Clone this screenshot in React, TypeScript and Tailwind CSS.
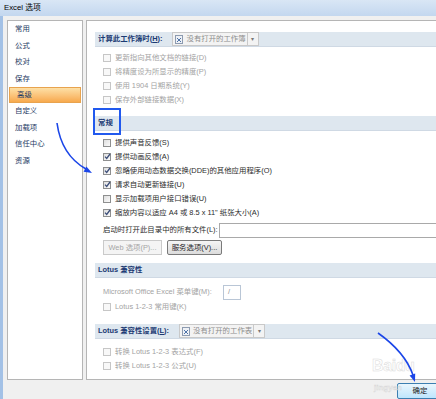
import React from "react";

const font = "font-['Liberation_Sans','Noto_Sans_CJK_SC',sans-serif]";

function Box({ checked = false, disabled = false }: { checked?: boolean; disabled?: boolean }) {
  return (
    <span
      className={`relative flex h-[8px] w-[8px] shrink-0 items-center justify-center border ${
        disabled
          ? "border-[#c6c6c6] bg-[#f8f8f8]"
          : "border-[#8e8f8f] bg-gradient-to-br from-[#dedede] to-[#fbfbfb]"
      }`}
    >
      {checked && (
        <svg width="7" height="7" viewBox="0 0 7 7" className="absolute -top-[1px] left-[0px]">
          <path d="M1 3.6 L2.7 5.4 L6 1" fill="none" stroke="#3d4f7a" strokeWidth="1.3" />
        </svg>
      )}
    </span>
  );
}

function Row({
  label,
  checked,
  disabled,
}: {
  label: string;
  checked?: boolean;
  disabled?: boolean;
}) {
  return (
    <div className="flex h-[14px] items-center gap-[4px] pl-[8px]">
      <Box checked={checked} disabled={disabled} />
      <span className={disabled ? "text-[#a3a3a3]" : "text-[#2c2c2c]"}>{label}</span>
    </div>
  );
}

function Band({ children, className = "" }: { children: React.ReactNode; className?: string }) {
  return (
    <div
      className={`flex h-[15px] items-center gap-[10px] border-b border-[#cfd9e4] bg-[#dee7ef] pl-[3px] font-bold text-[#1b3a73] ${className}`}
    >
      {children}
    </div>
  );
}

function Combo({ text }: { text: string }) {
  return (
    <div className="flex h-[14px] items-center border border-[#c9c9c9] bg-[#f3f3f3] font-normal">
      <svg width="9" height="9" viewBox="0 0 9 9" className="ml-[2px] shrink-0">
        <rect x="0.5" y="0.5" width="7" height="8" fill="#eef1f6" stroke="#8d9bb0" />
        <path d="M2 3 L6 7 M6 3 L2 7" stroke="#4f74a8" strokeWidth="1" />
      </svg>
      <span className="ml-[2px] mr-[1px] whitespace-nowrap text-[#8d8d8d]">{text}</span>
      <span className="flex h-full w-[11px] items-center justify-center border-l border-[#c9c9c9] text-[6px] text-[#777]">
        ▾
      </span>
    </div>
  );
}

const navItems = ["常用", "公式", "校对", "保存", "高级", "自定义", "加载项", "信任中心", "资源"];

export default function App() {
  return (
    <div className={`relative h-[399px] w-[436px] overflow-hidden bg-[#f0f0f0] text-[7.4px] leading-none ${font}`}>
      <div className="flex h-[16px] items-center bg-gradient-to-b from-[#d9e6f5] to-[#c3d7ef] pl-[4px] text-[7.8px] text-black">
        Excel 选项
      </div>
      <div className="flex h-[383px] flex-col border-l-[3px] border-[#a3c1e6]">
        <div className="flex gap-[3px] pl-[4px] pt-[4px]">
          <div className="h-[360px] w-[76px] shrink-0 border border-[#b5b5b5] bg-white">
            {navItems.map((n) => (
              <div
                key={n}
                className={`flex h-[16.4px] items-center pl-[7px] text-[#1e3a63] ${
                  n === "高级"
                    ? "mx-[1px] border border-[#e8a34e] bg-gradient-to-b from-[#fde0a6] to-[#f7a94c] pl-[6px]"
                    : ""
                }`}
              >
                {n}
              </div>
            ))}
          </div>
          <div className="h-[360px] w-[370px] shrink-0 border border-[#b5b5b5] bg-white pl-[8px] pt-[11px]">
            <Band>
              <span>计算此工作簿时(<u>H</u>):</span>
              <Combo text="没有打开的工作簿" />
            </Band>
            <div className="mt-[4px]">
              <Row label="更新指向其他文档的链接(D)" disabled />
              <Row label="将精度设为所显示的精度(P)" disabled />
              <Row label="使用 1904 日期系统(Y)" disabled />
              <Row label="保存外部链接数据(X)" disabled />
            </div>
            <Band className="mt-[9px]">常规</Band>
            <div className="mt-[5px]">
              <Row label="提供声音反馈(S)" />
              <Row label="提供动画反馈(A)" checked />
              <Row label="忽略使用动态数据交换(DDE)的其他应用程序(O)" checked />
              <Row label="请求自动更新链接(U)" checked />
              <Row label="显示加载项用户接口错误(U)" />
              <Row label='缩放内容以适应 A4 或 8.5 x 11" 纸张大小(A)' checked />
            </div>
            <div className="mt-[2px] flex h-[16px] items-center pl-[8px] text-[#2c2c2c]">
              <span className="w-[116px]">启动时打开此目录中的所有文件(L):</span>
              <div className="h-[15px] flex-1 border border-[#a9a9a9] bg-white" />
            </div>
            <div className="mt-[2px] flex h-[15px] items-stretch gap-[5px] pl-[8px]">
              <div className="flex w-[59px] items-center justify-center border border-[#cacaca] bg-[#f4f4f4] text-[#a5a5a5]">
                Web 选项(P)...
              </div>
              <div className="flex w-[55px] items-center justify-center rounded-[2px] border border-[#7a7a7a] bg-gradient-to-b from-[#f5f5f5] to-[#dcdcdc] text-[#1f1f1f]">
                服务选项(V)...
              </div>
            </div>
            <Band className="mt-[8px]">Lotus 兼容性</Band>
            <div className="mt-[6px] flex h-[16px] items-center pl-[8px] text-[#a3a3a3]">
              <span className="w-[120px]">Microsoft Office Excel 菜单键(M):</span>
              <div className="flex h-[15px] w-[18px] items-center border border-[#b9c6d6] bg-white pl-[4px] text-[#8f8f8f]">
                /
              </div>
            </div>
            <Row label="Lotus 1-2-3 常用键(K)" disabled />
            <Band className="mt-[10px]">
              <span>Lotus 兼容性设置(<u>L</u>):</span>
              <Combo text="没有打开的工作表" />
            </Band>
            <div className="mt-[6px]">
              <Row label="转换 Lotus 1-2-3 表达式(F)" disabled />
              <Row label="转换 Lotus 1-2-3 公式(U)" disabled />
            </div>
          </div>
        </div>
        <div className="ml-[394px] mt-[3px] flex h-[18px] w-[46px] items-center justify-center rounded-[2px] border border-[#3c7fb1] bg-gradient-to-b from-[#eaf6fd] to-[#bee6fd] text-[#1a1a1a]">
          确定
        </div>
      </div>

      <div className="pointer-events-none absolute left-[93px] top-[108px] h-[27px] w-[28px] border-2 border-[#2159ee]" />

      <div className="pointer-events-none absolute left-[372px] top-[358px] text-[16px] font-bold leading-none tracking-tight text-transparent [-webkit-text-stroke:0.5px_#dadada]">
        Baidu
      </div>
      <div className="pointer-events-none absolute left-[374px] top-[384px] text-[8px] font-bold leading-none text-transparent [-webkit-text-stroke:0.4px_#d6d6d6]">
        jingyan
      </div>

      <svg className="pointer-events-none absolute left-0 top-0" width="436" height="399">
        <path d="M57 123 C 60 145, 70 160, 86 169" fill="none" stroke="#1b46e8" strokeWidth="1.6" />
        <polygon points="92,173 83.6,171.8 86.4,166.6" fill="#1b46e8" />
        <path d="M378 333 C 395 345, 407 358, 413 375" fill="none" stroke="#1b46e8" strokeWidth="1.6" />
        <polygon points="415,382 409.6,375.4 415.2,373.4" fill="#1b46e8" />
      </svg>
    </div>
  );
}
